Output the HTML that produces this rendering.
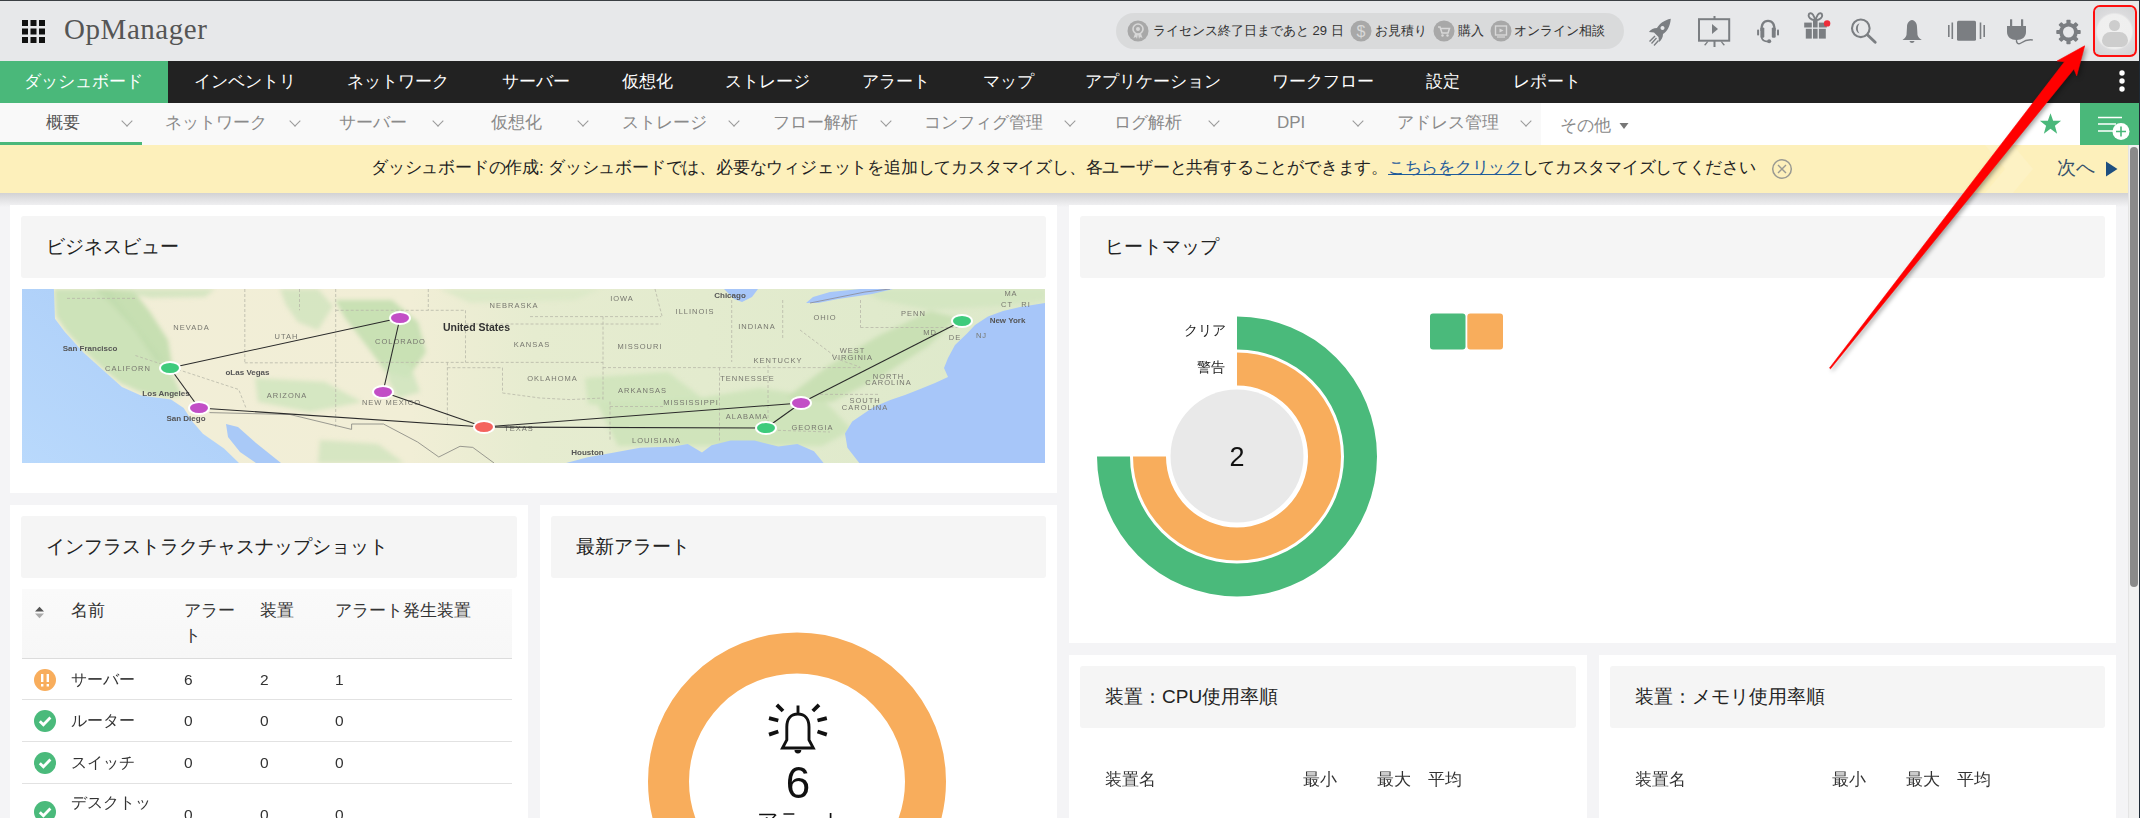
<!DOCTYPE html>
<html><head><meta charset="utf-8">
<style>
*{box-sizing:border-box;margin:0;padding:0}
html,body{width:2140px;height:818px;overflow:hidden;background:#f4f4f6;font-family:"Liberation Sans",sans-serif;color:#222}
.a{position:absolute;white-space:nowrap}
#hdr{position:absolute;left:0;top:0;width:2140px;height:61px;background:#e7e8ea;border-top:1px solid #3b3f44}
#nav{position:absolute;left:0;top:61px;width:2140px;height:42px;background:#222}
#nav .t{position:absolute;top:0;line-height:42px;font-size:17px;color:#fff}
#sub{position:absolute;left:0;top:103px;width:2140px;height:42px;background:#f9f9f9}
#sub .t{position:absolute;top:0;line-height:40px;font-size:17px;color:#8a8a8a}
.chev{position:absolute;top:14px;width:8px;height:8px;border-right:1.2px solid #9a9a9a;border-bottom:1.2px solid #9a9a9a;transform:rotate(45deg)}
#ban{position:absolute;left:0;top:145px;width:2128px;height:48px;background:#fdf0bb}
.w{position:absolute;background:#fff}
.wh{position:absolute;background:#f5f5f5;border-radius:3px}
.wt{position:absolute;font-size:19px;color:#222;white-space:nowrap;line-height:24px}
</style></head><body>
<div id="hdr">
  <svg class="a" style="left:21px;top:18px" width="25" height="25" viewBox="0 0 25 25">
    <g fill="#111">
    <rect x="1" y="1" width="6" height="6"/><rect x="9.5" y="1" width="6" height="6"/><rect x="18" y="1" width="6" height="6"/>
    <rect x="1" y="9.5" width="6" height="6"/><rect x="9.5" y="9.5" width="6" height="6"/><rect x="18" y="9.5" width="6" height="6"/>
    <rect x="1" y="18" width="6" height="6"/><rect x="9.5" y="18" width="6" height="6"/><rect x="18" y="18" width="6" height="6"/>
    </g></svg>
  <div class="a" style="left:64px;top:10px;font-family:'Liberation Serif',serif;font-size:29px;line-height:36px;color:#555;letter-spacing:0.55px">OpManager</div>
  <div class="a" style="left:1116px;top:12px;width:508px;height:36px;border-radius:18px;background:#d9dadb"></div>
  <svg class="a" style="left:1127px;top:19px" width="22" height="22" viewBox="0 0 22 22"><circle cx="11" cy="11" r="10.5" fill="#a8a8a8"/><circle cx="11" cy="9" r="5" fill="none" stroke="#d8d8d8" stroke-width="1.6"/><circle cx="11" cy="9" r="2" fill="#d8d8d8"/><path d="M8 13.5 L6.5 18 L9 17 L10 19 L11 14 M14 13.5 L15.5 18 L13 17 L12 19 L11 14" fill="#d8d8d8"/></svg>
  <div class="a" style="left:1153px;top:21px;font-size:13px;line-height:18px;color:#333">ライセンス終了日まであと 29 日</div>
  <svg class="a" style="left:1350px;top:19px" width="22" height="22" viewBox="0 0 22 22"><circle cx="11" cy="11" r="10.5" fill="#a8a8a8"/><text x="11" y="16.5" text-anchor="middle" font-size="16" fill="#d8d8d8" font-family="Liberation Sans">$</text></svg>
  <div class="a" style="left:1375px;top:21px;font-size:13px;line-height:18px;color:#333">お見積り</div>
  <svg class="a" style="left:1433px;top:19px" width="22" height="22" viewBox="0 0 22 22"><circle cx="11" cy="11" r="10.5" fill="#a8a8a8"/><path d="M5 7 H7 L9 13 H15 L16.5 8.5 H8" fill="none" stroke="#d8d8d8" stroke-width="1.5"/><circle cx="9.5" cy="15.5" r="1.2" fill="#d8d8d8"/><circle cx="14.5" cy="15.5" r="1.2" fill="#d8d8d8"/></svg>
  <div class="a" style="left:1458px;top:21px;font-size:13px;line-height:18px;color:#333">購入</div>
  <svg class="a" style="left:1490px;top:19px" width="22" height="22" viewBox="0 0 22 22"><circle cx="11" cy="11" r="10.5" fill="#a8a8a8"/><rect x="5.5" y="6" width="11" height="9" fill="none" stroke="#d8d8d8" stroke-width="1.4"/><path d="M9.5 8.5 L13.5 10.5 L9.5 12.5Z" fill="#d8d8d8"/><path d="M7 17 H15" stroke="#d8d8d8" stroke-width="1.2"/></svg>
  <div class="a" style="left:1514px;top:21px;font-size:13px;line-height:18px;color:#333">オンライン相談</div>
  <!-- icons -->
  <svg class="a" style="left:1640px;top:8px" width="500" height="50" viewBox="1640 8 500 50">
    <g fill="#7b7e82">
    <!-- rocket -->
    <path d="M1670.8 17.8 C1664 19 1659.5 23 1657 27 C1653.5 27 1651 28.5 1648.9 31 L1654 31.5 L1658.5 36 L1659 41 C1661.5 39 1663 36.5 1663 33 C1667 30.5 1670 26 1670.8 17.8Z M1662.5 25 a2 2 0 1 0 0.01 0Z" fill-rule="evenodd"/>
    <path d="M1651 42 L1656 36.5 L1657 37.5 L1652 43Z M1649 40 L1654.5 34.5 L1655.5 35.5 L1650 41Z M1653.5 44 L1658 39 L1659 40 L1654.5 45Z"/>
    <!-- presentation -->
    <rect x="1699" y="18.2" width="30.2" height="21.5" fill="none" stroke="#7b7e82" stroke-width="2"/>
    <rect x="1713.5" y="15" width="2" height="3.5"/>
    <rect x="1713.5" y="40" width="2" height="6"/>
    <path d="M1704 44 L1707 40.5 L1708.5 40.5 L1705.5 44.5Z M1725 44 L1722 40.5 L1720.5 40.5 L1723.5 44.5Z"/>
    <path d="M1712 23 L1718 28 L1712 33Z"/>
    <!-- headset -->
    <path d="M1761.6 30 C1761.2 23 1763.5 19.9 1768 19.9 C1772.5 19.9 1774.8 23 1774.4 30" fill="none" stroke="#7b7e82" stroke-width="2.3"/>
    <rect x="1757.1" y="28.6" width="2" height="5.9" rx="0.8"/>
    <rect x="1777" y="28.6" width="2" height="5.9" rx="0.8"/>
    <rect x="1760.4" y="26.4" width="3.9" height="10.4" rx="1.2"/>
    <rect x="1771.8" y="26.4" width="3.9" height="10.4" rx="1.2"/>
    <path d="M1761.6 36 C1761.8 39.5 1764.5 40.5 1768.5 40.5" fill="none" stroke="#7b7e82" stroke-width="1.8"/>
    <circle cx="1769.2" cy="40.3" r="2"/>
    <g transform="translate(0,-1.2)"><!-- gift -->
    <rect x="1804.2" y="22.8" width="7.6" height="4.9"/><rect x="1813" y="20.8" width="4.6" height="6.9"/><rect x="1818.9" y="22.8" width="7.9" height="4.9"/>
    <rect x="1805.8" y="29" width="6" height="9.8"/><rect x="1813" y="29" width="4.6" height="9.8"/><rect x="1818.9" y="29" width="6.9" height="9.8"/>
    <path d="M1815 20.5 C1812 20 1808.5 18.5 1808.6 15.5 C1808.8 13 1811.5 12.8 1813 15 C1814 16.5 1814.8 18.5 1815 20.5Z M1815.8 20.5 C1818.8 20 1822.3 18.5 1822.2 15.5 C1822 13 1819.3 12.8 1817.8 15 C1816.8 16.5 1816 18.5 1815.8 20.5Z" fill="none" stroke="#7b7e82" stroke-width="1.9"/>
    </g>
    <g transform="translate(0,-1)"><!-- search -->
    <circle cx="1860.8" cy="28.3" r="8.8" fill="none" stroke="#7b7e82" stroke-width="2.1"/>
    <path d="M1859.6 23.2 C1855.2 24.2 1854.2 31.8 1859.6 33.5 C1857.3 31 1857.3 26 1859.6 23.2Z" fill="#7b7e82"/>
    <path d="M1867.6 35 L1875.2 42.2" stroke="#7b7e82" stroke-width="2.9" stroke-linecap="round"/>
    </g>
    <!-- bell -->
    <path d="M1912 19 C1909 19.5 1907 22 1907 26 L1906.5 34 C1906 36 1904 38 1902.5 39 L1921.8 39 C1920 38 1918 36 1917.5 34 L1917 26 C1917 22 1915 19.5 1912 19Z"/>
    <path d="M1909.5 40 L1914.5 40 C1914 42.5 1910 42.5 1909.5 40Z"/>
    <!-- vibrate -->
    <rect x="1957" y="19.7" width="19" height="20" rx="1.5"/>
    <rect x="1948" y="24" width="1.6" height="12"/><rect x="1951.5" y="21.5" width="1.6" height="16.5"/>
    <rect x="1979.7" y="21.5" width="1.6" height="16.5"/><rect x="1983.4" y="24" width="1.6" height="12"/>
    <!-- plug -->
    <rect x="2010" y="18.3" width="2.2" height="7"/><rect x="2021" y="18.3" width="2.2" height="7"/>
    <path d="M2007 25 H2026 V31 C2026 36 2022 39 2016.5 39 C2011 39 2007 36 2007 31Z"/>
    <path d="M2016.5 38 C2016 42 2018 44 2021 42 C2024 40 2027 38 2032.8 39" fill="none" stroke="#7b7e82" stroke-width="1.4"/>
    <!-- gear -->
    <g transform="translate(2068.5 31)">
      <circle r="7.4" fill="none" stroke="#7b7e82" stroke-width="3.8"/>
      <g><rect x="-2.1" y="-12.2" width="4.2" height="5" rx="0.8"/><rect x="-2.1" y="7.2" width="4.2" height="5" rx="0.8"/><rect x="-12.2" y="-2.1" width="5" height="4.2" rx="0.8"/><rect x="7.2" y="-2.1" width="5" height="4.2" rx="0.8"/></g>
      <g transform="rotate(45)"><rect x="-2.1" y="-12.2" width="4.2" height="5" rx="0.8"/><rect x="-2.1" y="7.2" width="4.2" height="5" rx="0.8"/><rect x="-12.2" y="-2.1" width="5" height="4.2" rx="0.8"/><rect x="7.2" y="-2.1" width="5" height="4.2" rx="0.8"/></g>
    </g>
    </g>
    <circle cx="1827.1" cy="22.4" r="3.2" fill="#ee2d3a"/>
  </svg>
  <!-- avatar -->
  <div class="a" style="left:2093px;top:4px;width:44px;height:52px;border:2.5px solid #ff0d0d;border-radius:7px;background:#d6d7d9;overflow:hidden">
    <div style="position:absolute;left:0;top:0;width:39px;height:47px;background:radial-gradient(circle at 50% 52%,#f0f0f0 0,#efefef 17px,#dcdcde 19px,#d2d3d5 30px)"></div>
    <div style="position:absolute;left:14px;top:13px;width:11px;height:11px;border-radius:50%;background:#cdcdcd"></div>
    <div style="position:absolute;left:6.5px;top:25px;width:26px;height:15px;border-radius:13px 13px 10px 10px;background:#cdcdcd"></div>
  </div>
</div>
<div id="nav">
  <div style="position:absolute;left:0;top:0;width:168px;height:42px;background:#4ab87a"></div>
  <div class="t" style="left:24px">ダッシュボード</div>
  <div class="t" style="left:194px">インベントリ</div>
  <div class="t" style="left:347px">ネットワーク</div>
  <div class="t" style="left:502px">サーバー</div>
  <div class="t" style="left:622px">仮想化</div>
  <div class="t" style="left:725px">ストレージ</div>
  <div class="t" style="left:862px">アラート</div>
  <div class="t" style="left:983px">マップ</div>
  <div class="t" style="left:1085px">アプリケーション</div>
  <div class="t" style="left:1272px">ワークフロー</div>
  <div class="t" style="left:1426px">設定</div>
  <div class="t" style="left:1513px">レポート</div>
  <svg class="a" style="left:2117px;top:7px" width="10" height="28" viewBox="0 0 10 28"><circle cx="5" cy="5" r="2.7" fill="#fff"/><circle cx="5" cy="13" r="2.7" fill="#fff"/><circle cx="5" cy="21" r="2.7" fill="#fff"/></svg>
</div>
<div id="sub">
  <div style="position:absolute;left:0;top:39px;width:142px;height:3px;background:#4ab87a"></div>
  <div style="position:absolute;left:1541px;top:0;width:539px;height:42px;background:#fff"></div>
  <div style="position:absolute;left:2080px;top:0;width:60px;height:42px;background:#4ab87a"></div>
  <div class="chev" style="left:123px"></div><div class="chev" style="left:291px"></div><div class="chev" style="left:434px"></div><div class="chev" style="left:579px"></div><div class="chev" style="left:730px"></div><div class="chev" style="left:882px"></div><div class="chev" style="left:1066px"></div><div class="chev" style="left:1210px"></div><div class="chev" style="left:1354px"></div><div class="chev" style="left:1522px"></div><svg class="a" style="left:1619px;top:19px" width="10" height="8" viewBox="0 0 10 8"><path d="M0.5 1 H9.5 L5 7Z" fill="#777"/></svg><svg class="a" style="left:2039px;top:9px" width="23" height="23" viewBox="0 0 26 26"><path d="M13 1.5 L16 10 H25 L18 15.5 L20.5 24.5 L13 19 L5.5 24.5 L8 15.5 L1 10 H10Z" fill="#4ab87a"/></svg><svg class="a" style="left:2080px;top:0" width="60" height="42" viewBox="0 0 60 42"><g stroke="#fff" stroke-width="1.6"><path d="M18 14.5 H42 M18 21 H36 M18 28 H34"/></g><circle cx="41" cy="28.5" r="8.5" fill="#fff"/><path d="M41 23.5 V33.5 M36 28.5 H46" stroke="#4ab87a" stroke-width="1.6"/></svg><div class="t" style="left:46px;color:#555">概要</div>
  <div class="t" style="left:165px">ネットワーク</div>
  <div class="t" style="left:339px">サーバー</div>
  <div class="t" style="left:491px">仮想化</div>
  <div class="t" style="left:622px">ストレージ</div>
  <div class="t" style="left:773px">フロー解析</div>
  <div class="t" style="left:924px">コンフィグ管理</div>
  <div class="t" style="left:1114px">ログ解析</div>
  <div class="t" style="left:1277px">DPI</div>
  <div class="t" style="left:1397px">アドレス管理</div>
  <div class="t" style="left:1560px;top:3px">その他</div>
</div>
<div id="ban">
  <svg class="a" style="left:1985px;top:0" width="60" height="48" viewBox="0 0 60 48"><path d="M0 0 H28 L48 24 L28 48 H0 L20 24Z" fill="#fdf2c4"/></svg>
  <div class="a" style="left:371px;top:12px;font-size:17px;line-height:22px;color:#222"><span style="letter-spacing:-0.2px">ダッシュボードの作成: ダッシュボードでは、必要なウィジェットを追加してカスタマイズし、各ユーザーと共有することができます。</span><span style="color:#1d5a9a;text-decoration:underline;letter-spacing:-0.3px">こちらをクリック</span><span style="letter-spacing:-0.3px">してカスタマイズしてください</span></div>
  <svg class="a" style="left:1771px;top:13px" width="22" height="22" viewBox="0 0 22 22"><circle cx="11" cy="11" r="9.3" fill="none" stroke="#9a9a92" stroke-width="1.5"/><path d="M7 7 L15 15 M15 7 L7 15" stroke="#9a9a92" stroke-width="1.4"/></svg>
  <div class="a" style="left:2057px;top:11px;font-size:18.5px;line-height:24px;color:#37506b">次へ</div>
  <svg class="a" style="left:2105px;top:15px" width="14" height="18" viewBox="0 0 14 18"><path d="M1 1.5 L12.5 9 L1 16.5Z" fill="#1e4f80"/></svg>
</div>
<div class="a" style="left:0;top:193px;width:2128px;height:14px;background:linear-gradient(#d2d2d4,#f4f4f6)"></div>
<div class="a" style="left:2128px;top:145px;width:12px;height:673px;background:#f1f1f1;border-left:1px solid #e4e4e4"></div>
<div class="a" style="left:2130px;top:147px;width:8px;height:440px;background:#8a8a8a;border-radius:4px"></div>
<div class="a" style="left:2139px;top:0;width:1px;height:818px;background:#1e2a36"></div>

<!-- widgets -->
<div class="w" style="left:10px;top:205px;width:1047px;height:288px"></div>
<div class="wh" style="left:21px;top:216px;width:1025px;height:62px"></div>
<div class="wt" style="left:46px;top:235px">ビジネスビュー</div>
<svg id="map" class="a" style="left:22px;top:289px" width="1023" height="174" viewBox="0 0 1023 174">
<defs><linearGradient id="land" x1="0" x2="1" y1="0" y2="0"><stop offset="0" stop-color="#f2eed8"/><stop offset="0.38" stop-color="#f1eed6"/><stop offset="0.5" stop-color="#e6ecd0"/><stop offset="1" stop-color="#dde9ca"/></linearGradient>
<linearGradient id="sea" x1="0" x2="1" y1="1" y2="0"><stop offset="0" stop-color="#b9d9fc"/><stop offset="1" stop-color="#a9cbf7"/></linearGradient>
<filter id="bl" x="-10%" y="-10%" width="120%" height="120%"><feGaussianBlur stdDeviation="2.2"/></filter></defs>
<rect width="1023" height="174" fill="url(#land)"/>
<g filter="url(#bl)">
<polygon points="32.0,0.0 88.0,0.0 100.0,17.0 118.0,41.0 136.0,63.0 153.0,91.0 160.0,107.0 143.0,109.0 118.0,103.0 98.0,94.0 78.0,77.0 61.0,61.0 44.0,42.0 34.0,27.0" fill="#c9e1b6" opacity="0.9"/>
<polygon points="73.0,0.0 110.0,0.0 128.0,23.0 146.0,51.0 150.0,76.0 134.0,73.0 113.0,41.0 90.0,16.0" fill="#c2ddae" opacity="0.9"/>
<polygon points="88.0,0.0 193.0,0.0 183.0,8.0 128.0,9.0" fill="#cfe4bd" opacity="0.8"/>
<polygon points="258.0,0.0 296.0,0.0 311.0,17.0 296.0,41.0 276.0,33.0 264.0,16.0" fill="#cfe4bd" opacity="0.8"/>
<polygon points="313.0,11.0 370.0,11.0 396.0,33.0 404.0,63.0 386.0,89.0 364.0,83.0 344.0,56.0 323.0,29.0" fill="#c6dfb2" opacity="0.95"/>
<polygon points="364.0,71.0 388.0,75.0 398.0,103.0 376.0,109.0 366.0,91.0" fill="#cfe4bd" opacity="0.85"/>
<polygon points="233.0,89.0 303.0,93.0 340.0,113.0 288.0,123.0 236.0,113.0" fill="#d0e5be" opacity="0.85"/>
<polygon points="298.0,151.0 356.0,155.0 382.0,174.0 296.0,174.0" fill="#cfe4bd" opacity="0.8"/>
<polygon points="563.0,89.0 646.0,83.0 680.0,109.0 623.0,121.0 566.0,115.0" fill="#cfe4bb" opacity="0.9"/>
<polygon points="576.0,116.0 678.0,109.0 738.0,99.0 800.0,109.0 830.0,141.0 800.0,157.0 678.0,157.0 596.0,157.0" fill="#cde3b9" opacity="0.9"/>
<polygon points="764.0,109.0 806.0,77.0 856.0,47.0 908.0,22.0 936.0,29.0 906.0,57.0 860.0,87.0 810.0,113.0" fill="#c7dfb1" opacity="0.9"/>
<polygon points="838.0,0.0 1023.0,0.0 1023.0,11.0 980.0,17.0 908.0,21.0 858.0,11.0" fill="#d2e5bf" opacity="0.85"/>
<polygon points="418.0,0.0 578.0,0.0 553.0,11.0 448.0,14.0" fill="#dce9c8" opacity="0.9"/>
</g><g fill="none" stroke="#b8b8a8" stroke-width="0.8" stroke-dasharray="3 2">
<polyline points="45.0,9.4 113.4,9.4"/>
<polyline points="222.8,0.0 222.8,73.8"/>
<polyline points="222.8,73.8 313.7,73.8"/>
<polyline points="313.7,0.0 313.7,140.0"/>
<polyline points="313.7,21.3 443.5,21.3"/>
<polyline points="443.5,21.3 443.5,73.4"/>
<polyline points="277.5,0.0 277.5,21.3"/>
<polyline points="406.3,0.0 406.3,21.3"/>
<polyline points="113.4,66.5 216.7,100.5 224.0,119.0"/>
<polyline points="425.4,78.7 480.5,78.7"/>
<polyline points="480.5,78.7 480.5,104.0"/>
<polyline points="480.5,104.0 518.0,109.0 548.0,110.6 581.0,109.0"/>
<polyline points="443.5,35.0 639.0,35.0"/>
<polyline points="508.0,27.6 639.2,27.6"/>
<polyline points="313.7,73.4 581.0,73.4"/>
<polyline points="581.0,78.6 675.7,78.6"/>
<polyline points="581.0,27.6 581.0,112.6"/>
<polyline points="588.0,112.6 588.0,151.5"/>
<polyline points="588.0,117.5 643.0,117.5"/>
<polyline points="697.5,78.6 697.5,151.5"/>
<polyline points="746.0,76.0 746.0,141.0"/>
<polyline points="675.7,78.6 838.5,78.6"/>
<polyline points="709.7,11.0 709.7,73.0"/>
<polyline points="760.7,11.0 760.7,49.0"/>
<polyline points="838.5,11.0 838.5,38.5"/>
<polyline points="838.5,38.5 940.6,38.5"/>
<polyline points="798.0,105.4 858.0,105.4"/>
<polyline points="633.0,0.0 640.0,27.0"/>
<polyline points="425.4,73.4 425.4,136.0"/>
<polyline points="746.0,141.0 808.0,143.0"/>
<polyline points="778.0,41.0 818.0,71.0 838.0,78.0"/>
</g>
<polyline points="187.5,123.6 268.0,125.5 329.6,140.4 329.6,135.0 361.5,135.0 395.6,153.0 416.8,168.0 438.0,157.3 450.8,158.4 472.0,174.0" fill="none" stroke="#8f8f88" stroke-width="0.9"/>
<polygon points="0.0,0.0 31.9,0.0 33.0,29.8 42.5,42.6 61.7,63.8 80.9,80.9 100.0,97.9 119.0,106.4 149.0,110.6 161.7,119.0 170.0,132.0 180.9,144.7 202.0,159.6 217.0,174.0 0.0,174.0" fill="url(#sea)"/>
<polygon points="204.0,135.0 216.0,138.0 234.0,154.0 259.0,174.0 234.0,174.0 218.0,163.0 206.0,148.0" fill="#a9c9f7"/>
<polygon points="544.2,174.0 565.7,168.2 589.5,163.9 618.0,158.7 651.5,157.5 665.8,155.0 680.0,163.4 689.6,156.3 708.7,151.5 732.5,151.5 756.3,157.5 775.4,155.0 792.0,162.2 801.6,174.0" fill="#a9c8f8"/>
<polygon points="837.3,174.0 825.4,158.7 823.0,144.4 830.2,132.4 851.6,118.1 868.3,111.0 883.0,106.0 897.0,100.5 913.0,94.0 926.0,88.0 922.0,79.0 926.0,69.0 933.0,56.0 945.0,44.6 953.0,36.0 966.0,27.6 981.0,22.0 998.0,18.0 1023.0,14.0 1023.0,174.0" fill="#a7c6f9"/>
<polygon points="702.0,0.0 736.0,0.0 730.0,8.0 720.0,13.0 712.0,10.0" fill="#a7c6f9"/>
<polygon points="784.0,14.0 791.0,8.0 808.0,3.0 838.0,0.0 871.0,0.0 850.0,5.0 816.0,10.0 796.0,14.0" fill="#a7c6f9"/>
<polyline points="788.0,14.0 803.0,11.0 843.0,3.0 868.0,0.0" fill="none" stroke="#8a8a96" stroke-width="0.8"/>
<g font-family="Liberation Sans" font-size="7.5" fill="#77776f" text-anchor="middle" letter-spacing="1">
<text x="492.0" y="18.5">NEBRASKA</text>
<text x="600.0" y="11.5">IOWA</text>
<text x="673.0" y="24.5">ILLINOIS</text>
<text x="803.0" y="30.5">OHIO</text>
<text x="891.5" y="26.5">PENN</text>
<text x="989.0" y="6.5">MA</text>
<text x="985.0" y="18.0">CT</text>
<text x="1004.0" y="18.0">RI</text>
<text x="169.5" y="40.5">NEVADA</text>
<text x="264.5" y="49.5">UTAH</text>
<text x="378.5" y="54.5">COLORADO</text>
<text x="510.0" y="57.5">KANSAS</text>
<text x="618.0" y="59.5">MISSOURI</text>
<text x="735.0" y="39.5">INDIANA</text>
<text x="830.5" y="64.0">WEST</text>
<text x="830.5" y="70.5">VIRGINIA</text>
<text x="908.0" y="45.5">MD</text>
<text x="933.0" y="50.5">DE</text>
<text x="959.5" y="49.0">NJ</text>
<text x="106.0" y="82.0">CALIFORN</text>
<text x="756.0" y="74.0">KENTUCKY</text>
<text x="530.5" y="92.0">OKLAHOMA</text>
<text x="725.5" y="92.0">TENNESSEE</text>
<text x="866.5" y="89.5">NORTH</text>
<text x="866.5" y="95.5">CAROLINA</text>
<text x="265.0" y="108.5">ARIZONA</text>
<text x="620.5" y="103.5">ARKANSAS</text>
<text x="843.0" y="114.0">SOUTH</text>
<text x="843.0" y="120.5">CAROLINA</text>
<text x="369.5" y="115.5">NEW MEXICO</text>
<text x="669.0" y="116.0">MISSISSIPPI</text>
<text x="725.0" y="129.5">ALABAMA</text>
<text x="497.0" y="141.5">TEXAS</text>
<text x="790.5" y="140.5">GEORGIA</text>
<text x="634.5" y="154.0">LOUISIANA</text>
</g><g font-family="Liberation Sans" font-size="8" fill="#555" text-anchor="middle" font-weight="bold">
<text x="708.0" y="8.5">Chicago</text>
<text x="985.5" y="34.0">New York</text>
<text x="68.0" y="61.5">San Francisco</text>
<text x="225.5" y="86.0">oLas Vegas</text>
<text x="144.0" y="107.0">Los Angeles</text>
<text x="164.0" y="132.0">San Diego</text>
<text x="565.5" y="166.0">Houston</text>
<text x="454.5" y="41.5" font-size="10.5" fill="#333">United States</text></g>
<g stroke="#2a2a2a" stroke-width="1.1">
<line x1="148" y1="79" x2="378" y2="29"/>
<line x1="378" y1="29" x2="361" y2="103"/>
<line x1="148" y1="79" x2="177" y2="119"/>
<line x1="177" y1="119" x2="462" y2="138"/>
<line x1="361" y1="103" x2="462" y2="138"/>
<line x1="462" y1="138" x2="779" y2="114"/>
<line x1="462" y1="138" x2="744" y2="139"/>
<line x1="744" y1="139" x2="779" y2="114"/>
<line x1="779" y1="114" x2="940" y2="32"/>
</g>
<ellipse cx="148" cy="79" rx="10" ry="6" fill="#3ecb7c" stroke="#fff" stroke-width="2"/>
<ellipse cx="378" cy="29" rx="10" ry="6" fill="#c24ec6" stroke="#fff" stroke-width="2"/>
<ellipse cx="361" cy="103" rx="10" ry="6" fill="#c24ec6" stroke="#fff" stroke-width="2"/>
<ellipse cx="177" cy="119" rx="10" ry="6" fill="#c24ec6" stroke="#fff" stroke-width="2"/>
<ellipse cx="462" cy="138" rx="10" ry="6" fill="#f4635e" stroke="#fff" stroke-width="2"/>
<ellipse cx="779" cy="114" rx="10" ry="6" fill="#c24ec6" stroke="#fff" stroke-width="2"/>
<ellipse cx="744" cy="139" rx="10" ry="6" fill="#3ecb7c" stroke="#fff" stroke-width="2"/>
<ellipse cx="940" cy="32" rx="10" ry="6" fill="#3ecb7c" stroke="#fff" stroke-width="2"/>
</svg>

<div class="w" style="left:1069px;top:205px;width:1047px;height:438px"></div>
<div class="wh" style="left:1080px;top:216px;width:1025px;height:62px"></div>
<div class="wt" style="left:1105px;top:235px">ヒートマップ</div>
<svg class="a" style="left:0;top:0" width="2140" height="818" viewBox="0 0 2140 818" pointer-events="none">
<path d="M1237,316.5 A140,140 0 1 1 1097,456.5 L1130,456.5 A107,107 0 1 0 1237,349.5 Z" fill="#4aba7b"/>
<path d="M1237,352.5 A104,104 0 1 1 1133,456.5 L1166,456.5 A71,71 0 1 0 1237,385.5 Z" fill="#f8ad5c"/>
<circle cx="1237" cy="456" r="66.5" fill="#e9e9e9"/>
<text x="1237" y="466" text-anchor="middle" font-family="Liberation Sans" font-size="27" fill="#111">2</text>
<rect x="1430" y="313.5" width="35.5" height="36" rx="3" fill="#4aba7b"/>
<rect x="1467.3" y="313.5" width="35.7" height="36" rx="3" fill="#f8ad5c"/>
</svg>
<div class="a" style="left:1184px;top:322px;font-size:13.5px;line-height:18px;color:#222">クリア</div>
<div class="a" style="left:1197px;top:359px;font-size:13.5px;line-height:18px;color:#222">警告</div>

<div class="w" style="left:10px;top:505px;width:518px;height:320px"></div>
<div class="wh" style="left:21px;top:516px;width:496px;height:62px"></div>
<div class="wt" style="left:46px;top:535px">インフラストラクチャスナップショット</div>
<div class="a" style="left:22px;top:589px;width:490px;height:70px;background:linear-gradient(#fafafa,#f7f7f7);border-bottom:1px solid #dcdcdc"></div>
<svg class="a" style="left:34px;top:606px" width="11" height="13" viewBox="0 0 11 13"><path d="M1 5.5 L5.5 0.8 L10 5.5Z" fill="#555"/><path d="M1 7.5 L5.5 12.2 L10 7.5Z" fill="#aaa"/></svg>
<div class="a" style="left:71px;top:600px;font-size:17px;line-height:22px;color:#333">名前</div>
<div class="a" style="left:184px;top:600px;font-size:17px;line-height:22px;color:#333">アラー</div>
<div class="a" style="left:184px;top:625px;font-size:17px;line-height:22px;color:#333">ト</div>
<div class="a" style="left:260px;top:600px;font-size:17px;line-height:22px;color:#333">装置</div>
<div class="a" style="left:335px;top:600px;font-size:17px;line-height:22px;color:#333">アラート発生装置</div>
<div class="a" style="left:22px;top:699px;width:490px;height:1px;background:#e2e2e2"></div>
<div class="a" style="left:22px;top:741px;width:490px;height:1px;background:#e2e2e2"></div>
<div class="a" style="left:22px;top:783px;width:490px;height:1px;background:#e2e2e2"></div>
<svg class="a" style="left:34px;top:669px" width="22" height="22" viewBox="0 0 22 22"><circle cx="11" cy="11" r="11" fill="#f8ad5c"/><path d="M8.2 5 V13 M13.8 5 V13" stroke="#fff" stroke-width="2.4"/><path d="M8.2 15 V17.5 M13.8 15 V17.5" stroke="#fff" stroke-width="2.4"/></svg>
<svg class="a" style="left:34px;top:710px" width="22" height="22" viewBox="0 0 22 22"><circle cx="11" cy="11" r="11" fill="#4aba7b"/><path d="M5.8 11.2 L9.4 14.8 L16.4 7.6" fill="none" stroke="#fff" stroke-width="2.8"/></svg>
<svg class="a" style="left:34px;top:752px" width="22" height="22" viewBox="0 0 22 22"><circle cx="11" cy="11" r="11" fill="#4aba7b"/><path d="M5.8 11.2 L9.4 14.8 L16.4 7.6" fill="none" stroke="#fff" stroke-width="2.8"/></svg>
<svg class="a" style="left:34px;top:801px" width="22" height="22" viewBox="0 0 22 22"><circle cx="11" cy="11" r="11" fill="#4aba7b"/><path d="M5.8 11.2 L9.4 14.8 L16.4 7.6" fill="none" stroke="#fff" stroke-width="2.8"/></svg>
<div class="a" style="left:71px;top:670px;font-size:15.5px;line-height:20px;color:#333">サーバー</div>
<div class="a" style="left:71px;top:711px;font-size:15.5px;line-height:20px;color:#333">ルーター</div>
<div class="a" style="left:71px;top:753px;font-size:15.5px;line-height:20px;color:#333">スイッチ</div>
<div class="a" style="left:71px;top:793px;font-size:15.5px;line-height:20px;color:#333">デスクトッ</div>
<div class="a" style="left:184px;top:670px;font-size:15.5px;line-height:20px;color:#333">6</div>
<div class="a" style="left:260px;top:670px;font-size:15.5px;line-height:20px;color:#333">2</div>
<div class="a" style="left:335px;top:670px;font-size:15.5px;line-height:20px;color:#333">1</div>
<div class="a" style="left:184px;top:711px;font-size:15.5px;line-height:20px;color:#333">0</div>
<div class="a" style="left:260px;top:711px;font-size:15.5px;line-height:20px;color:#333">0</div>
<div class="a" style="left:335px;top:711px;font-size:15.5px;line-height:20px;color:#333">0</div>
<div class="a" style="left:184px;top:753px;font-size:15.5px;line-height:20px;color:#333">0</div>
<div class="a" style="left:260px;top:753px;font-size:15.5px;line-height:20px;color:#333">0</div>
<div class="a" style="left:335px;top:753px;font-size:15.5px;line-height:20px;color:#333">0</div>
<div class="a" style="left:184px;top:805px;font-size:15.5px;line-height:20px;color:#333">0</div>
<div class="a" style="left:260px;top:805px;font-size:15.5px;line-height:20px;color:#333">0</div>
<div class="a" style="left:335px;top:805px;font-size:15.5px;line-height:20px;color:#333">0</div>

<div class="w" style="left:540px;top:505px;width:517px;height:320px"></div>
<div class="wh" style="left:551px;top:516px;width:495px;height:62px"></div>
<div class="wt" style="left:576px;top:535px">最新アラート</div>
<svg class="a" style="left:540px;top:578px" width="517" height="240" viewBox="540 578 517 240">
<circle cx="797" cy="781.5" r="128.5" fill="none" stroke="#f8ad5c" stroke-width="41"/>
<g stroke="#111" stroke-width="3.8" stroke-linecap="butt">
<path d="M769 718.2 L778.3 720.5 M769 734.6 L778.3 731.5 M776.8 704.9 L783 711 M826.8 718.2 L817.5 720.5 M826.8 734.6 L817.5 731.5 M819 704.9 L812.8 711"/>
</g>
<path d="M798 705.5 V713 M797.9 714 C791 714 786.8 719 786.8 727 V740 L782.5 748 H813.3 L809 740 V727 C809 719 804.8 714 797.9 714Z" fill="none" stroke="#111" stroke-width="2.9" stroke-linejoin="miter"/>
<path d="M794.5 750 A3.4 3.4 0 0 0 801.3 750Z" fill="#111"/>
<text x="798" y="797.5" text-anchor="middle" font-family="Liberation Sans" font-size="44" fill="#111">6</text>
</svg>
<div class="a" style="left:757px;top:809px;font-size:21px;line-height:24px;color:#111">アラート</div>

<div class="w" style="left:1069px;top:655px;width:518px;height:170px"></div>
<div class="wh" style="left:1080px;top:666px;width:496px;height:62px"></div>
<div class="wt" style="left:1105px;top:685px">装置：CPU使用率順</div>
<div class="a" style="left:1105px;top:769px;font-size:17px;line-height:22px;color:#333">装置名</div>
<div class="a" style="left:1303px;top:769px;font-size:17px;line-height:22px;color:#333">最小</div>
<div class="a" style="left:1377px;top:769px;font-size:17px;line-height:22px;color:#333">最大</div>
<div class="a" style="left:1428px;top:769px;font-size:17px;line-height:22px;color:#333">平均</div>

<div class="w" style="left:1599px;top:655px;width:517px;height:170px"></div>
<div class="wh" style="left:1610px;top:666px;width:495px;height:62px"></div>
<div class="wt" style="left:1635px;top:685px">装置：メモリ使用率順</div>
<div class="a" style="left:1635px;top:769px;font-size:17px;line-height:22px;color:#333">装置名</div>
<div class="a" style="left:1832px;top:769px;font-size:17px;line-height:22px;color:#333">最小</div>
<div class="a" style="left:1906px;top:769px;font-size:17px;line-height:22px;color:#333">最大</div>
<div class="a" style="left:1957px;top:769px;font-size:17px;line-height:22px;color:#333">平均</div>

<svg class="a" style="left:0;top:0;filter:drop-shadow(2px 2px 2px rgba(0,0,0,0.35))" width="2140" height="818" viewBox="0 0 2140 818"><path d="M1829.5,368.0 L2064.5,61.7 L2057.1,61.0 L2084.7,45.8 L2076.7,75.8 L2073.9,69.1 L1830.5,368.8Z" fill="#ff0000" stroke="#ff0000" stroke-width="0.6" stroke-linejoin="round"/></svg>
</body></html>
